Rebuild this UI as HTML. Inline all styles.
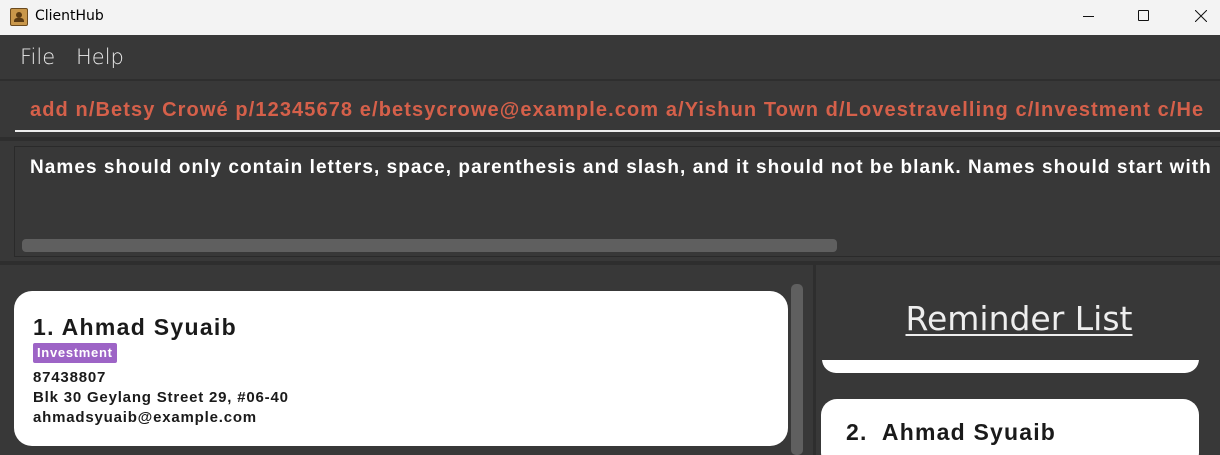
<!DOCTYPE html>
<html><head><meta charset="utf-8"><style>
*{margin:0;padding:0;box-sizing:border-box}
html,body{width:1220px;height:455px;overflow:hidden}
body{background:#383838;font-family:"Liberation Sans",sans-serif;position:relative}
.a{position:absolute}
</style></head><body>
<div class="a" style="left:0;top:0;width:1220px;height:35px;background:#f3f3f3"></div>
<div class="a" style="left:10px;top:8px;width:18px;height:18px;background:#c9974a;border:1px solid #6b4a1e;border-radius:2px"><div class="a" style="left:5px;top:3px;width:6px;height:6px;border-radius:50%;background:#5a3a12"></div><div class="a" style="left:3px;top:9px;width:10px;height:4px;background:#5a3a12;border-radius:3px 3px 0 0"></div></div>
<div class="a" style="left:35px;top:8px;font-size:14px;color:#000;font-family:'DejaVu Sans',sans-serif">ClientHub</div>
<div class="a" style="left:1083px;top:16px;width:11px;height:1px;background:#111"></div>
<div class="a" style="left:1138px;top:10px;width:11px;height:11px;border:1px solid #111;border-radius:1px"></div>
<svg class="a" style="left:1195px;top:10px" width="12" height="12"><path d="M0 0L12 12M12 0L0 12" stroke="#111" stroke-width="1"/></svg>
<div class="a" style="left:20px;top:45px;font-size:21px;color:#e8e8e8;font-family:'DejaVu Sans',sans-serif;font-weight:300">File</div>
<div class="a" style="left:76px;top:45px;font-size:21px;color:#e8e8e8;font-family:'DejaVu Sans',sans-serif;font-weight:300">Help</div>
<div class="a" style="left:0;top:79px;width:1220px;height:2px;background:#2e2e2e"></div>
<div class="a" style="left:30px;top:99px;font-size:20px;font-weight:bold;color:#d5604a;white-space:nowrap;letter-spacing:1.1px">add n/Betsy Crowé p/12345678 e/betsycrowe@example.com a/Yishun Town d/Lovestravelling c/Investment c/He</div>
<div class="a" style="left:15px;top:130px;width:1205px;height:2px;background:#eee"></div>
<div class="a" style="left:0;top:137px;width:1220px;height:4px;background:#2e2e2e"></div>
<div class="a" style="left:14px;top:146px;width:1206px;height:111px;border:1px solid #2a2a2a;border-right:none;overflow:hidden">
<div class="a" style="left:15px;top:10px;font-size:19px;font-weight:bold;color:#fff;white-space:nowrap;letter-spacing:1.05px">Names should only contain letters, space, parenthesis and slash, and it should not be blank. Names should start with</div>
<div class="a" style="left:7px;top:92px;width:815px;height:13px;background:#5f5f5f;border-radius:4px"></div>
</div>
<div class="a" style="left:0;top:261px;width:1220px;height:4px;background:#2e2e2e"></div>
<div class="a" style="left:813px;top:265px;width:3px;height:190px;background:#2e2e2e"></div>
<div class="a" style="left:14px;top:291px;width:774px;height:155px;background:#fff;border-radius:18px"></div>
<div class="a" style="left:33px;top:314px;font-size:23px;font-weight:bold;color:#1a1a1a;letter-spacing:1.3px">1. Ahmad Syuaib</div>
<div class="a" style="left:33px;top:343px;height:20px;padding:0 4px;background:#9d64c6;border-radius:2px;font-size:13px;font-weight:bold;color:#fff;line-height:20px;letter-spacing:0.7px">Investment</div>
<div class="a" style="left:33px;top:368px;font-size:15px;font-weight:bold;color:#1a1a1a;line-height:20px;letter-spacing:0.8px">87438807<br>Blk 30 Geylang Street 29, #06-40<br>ahmadsyuaib@example.com</div>
<div class="a" style="left:791px;top:284px;width:12px;height:171px;background:#5f5f5f;border-radius:5px"></div>
<div class="a" style="left:818px;top:299px;width:402px;text-align:center;font-size:33px;color:#eee;font-family:'DejaVu Sans',sans-serif;text-decoration:underline;text-underline-offset:4px;text-decoration-thickness:2px">Reminder List</div>
<div class="a" style="left:822px;top:340px;width:377px;height:33px;background:#fff;border-radius:0 0 14px 14px;clip-path:inset(20px 0 0 0)"></div>
<div class="a" style="left:821px;top:399px;width:378px;height:70px;background:#fff;border-radius:16px"></div>
<div class="a" style="left:846px;top:419px;font-size:23px;font-weight:bold;color:#1a1a1a;white-space:pre;letter-spacing:1.2px">2.  Ahmad Syuaib</div>
</body></html>
